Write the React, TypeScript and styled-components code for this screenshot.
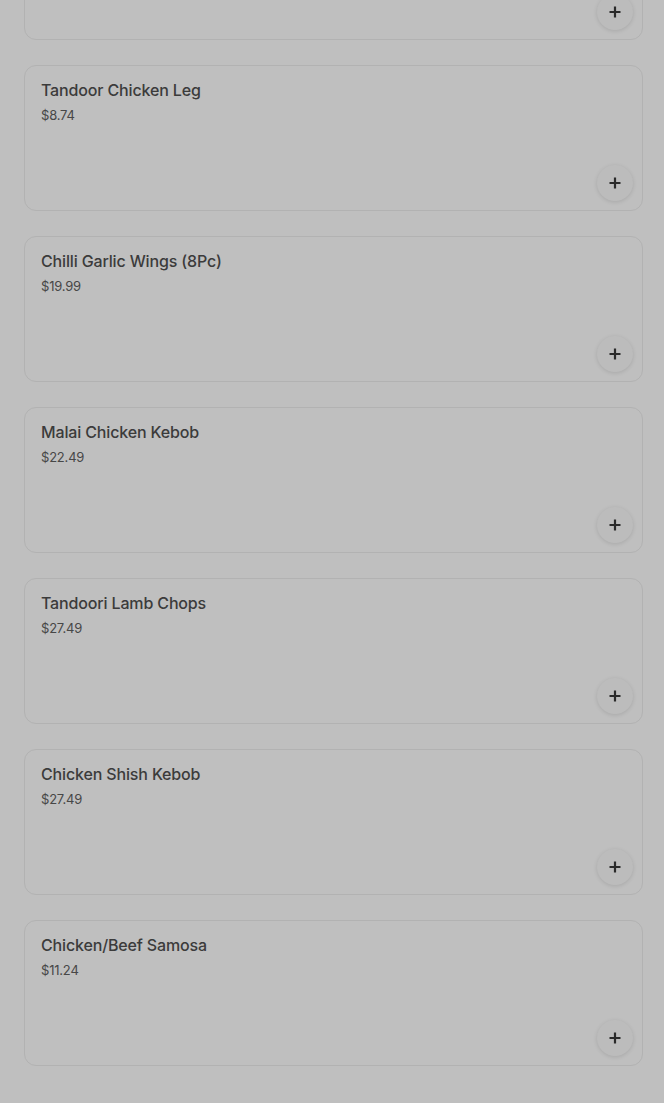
import React from 'react';
import styled, { createGlobalStyle } from 'styled-components';

const GlobalStyle = createGlobalStyle`
  html, body {
    margin: 0;
    padding: 0;
    background: #bfbfbf;
    overflow: hidden;
  }
  body {
    font-family: Inter, "Noto Sans", sans-serif;
  }
`;

const Page = styled.div`
  width: 664px;
  height: 1103px;
  overflow: hidden;
  background: #bfbfbf;
`;

const List = styled.div`
  display: flex;
  flex-direction: column;
  gap: 25px;
  padding: 0 21px 0 24px;
  margin-top: -106px;
`;

const Card = styled.div`
  height: 146px;
  box-sizing: border-box;
  border: 1px solid #b2b2b2;
  border-radius: 12px;
  padding: 13px 9px 9px 16px;
  display: flex;
  flex-direction: column;
`;

const Title = styled.div`
  font-size: 16px;
  font-weight: 500;
  color: #3b3b3b;
  line-height: 22px;
  letter-spacing: -0.15px;
`;

const Price = styled.div`
  margin-top: 5px;
  font-size: 13px;
  color: #474747;
  line-height: 18px;
  letter-spacing: -0.2px;
`;

const AddButton = styled.button`
  margin-top: auto;
  align-self: flex-end;
  width: 36px;
  height: 36px;
  border-radius: 50%;
  border: none;
  background: #bcbcbc;
  box-shadow: 0 1px 4px rgba(0, 0, 0, 0.12);
  display: flex;
  align-items: center;
  justify-content: center;
  padding: 0;
`;

const PlusIcon = () => (
  <svg width="12" height="12" viewBox="0 0 12 12">
    <path d="M6 0.5v11M0.5 6h11" stroke="#2a2a2a" strokeWidth="2.2" />
  </svg>
);

const items = [
  { name: '', price: '' },
  { name: 'Tandoor Chicken Leg', price: '$8.74' },
  { name: 'Chilli Garlic Wings (8Pc)', price: '$19.99' },
  { name: 'Malai Chicken Kebob', price: '$22.49' },
  { name: 'Tandoori Lamb Chops', price: '$27.49' },
  { name: 'Chicken Shish Kebob', price: '$27.49' },
  { name: 'Chicken/Beef Samosa', price: '$11.24' },
];

export default function App() {
  return (
    <Page>
      <GlobalStyle />
      <List>
        {items.map((item, i) => (
          <Card key={i}>
            <Title>{item.name}</Title>
            <Price>{item.price}</Price>
            <AddButton type="button" aria-label="Add">
              <PlusIcon />
            </AddButton>
          </Card>
        ))}
      </List>
    </Page>
  );
}
